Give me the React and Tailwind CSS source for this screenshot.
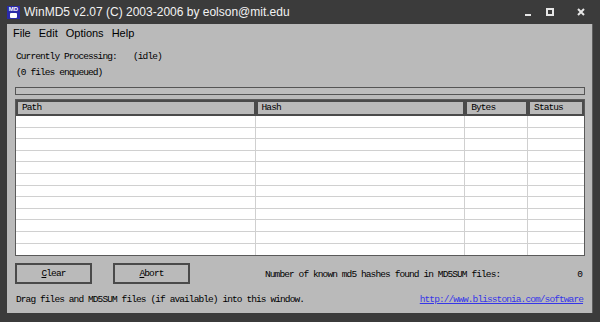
import React from "react";

const mono = { fontFamily: '"Liberation Mono", "DejaVu Sans Mono", monospace' };

function TitleBar() {
  return (
    <div className="h-[24px] flex items-center pl-[7px] pr-[10px] text-white">
      {/* app icon */}
      <div className="w-[13px] h-[13px] bg-[#2a2aa8] relative flex flex-col items-center justify-start">
        <span className="text-[6px] leading-[7px] font-bold text-white" style={{ fontFamily: '"Liberation Sans", sans-serif' }}>MD</span>
        <span className="w-[7px] h-[5px] bg-white rounded-[1px]" />
      </div>
      <span
        className="ml-[4px] text-[12px] leading-none text-[#f2f2f2]"
        style={{ fontFamily: '"Liberation Sans", Arial, sans-serif' }}
      >
        WinMD5 v2.07 (C) 2003-2006 by eolson@mit.edu
      </span>
      <div className="ml-auto flex items-center">
        <svg width="8" height="8" viewBox="0 0 8 8" className="mr-[14px] mt-[1px]">
          <rect x="1" y="5" width="6" height="2" fill="#e6e6e6" />
        </svg>
        <svg width="8" height="8" viewBox="0 0 8 8" className="mr-[23px]">
          <rect x="1" y="1" width="6" height="6" fill="none" stroke="#e6e6e6" strokeWidth="2" />
        </svg>
        <svg width="8" height="8" viewBox="0 0 8 8" className="mr-[5px]">
          <path d="M1 1 L7 7 M7 1 L1 7" stroke="#e6e6e6" strokeWidth="2" />
        </svg>
      </div>
    </div>
  );
}

function MenuBar() {
  const items = ["File", "Edit", "Options", "Help"];
  return (
    <div
      className="h-[18px] flex items-center pl-[6px] gap-[8px] text-[11px] text-black"
      style={{ fontFamily: '"Liberation Sans", Tahoma, sans-serif' }}
    >
      {items.map((m) => (
        <span key={m}>{m}</span>
      ))}
    </div>
  );
}

function HeaderCell({ label, w }) {
  return (
    <div
      className="h-[16px] flex items-center pl-[4px] bg-[#bababa] border-[2px] border-[#4a4a4a]"
      style={{ width: w }}
    >
      <span className="text-[9.5px] tracking-[-0.9px] text-black" style={mono}>
        {label}
      </span>
    </div>
  );
}

function Table() {
  const cols = [
    { label: "Path", w: 240 },
    { label: "Hash", w: 210 },
    { label: "Bytes", w: 63 },
    { label: "Status", w: 56 },
  ];
  const rows = Array.from({ length: 12 });
  return (
    <div className="mx-[8px] mt-[4px] border border-[#5a5a5a] bg-white w-[570px]">
      <div className="flex bg-[#bababa]">
        {cols.map((c) => (
          <HeaderCell key={c.label} label={c.label} w={c.w} />
        ))}
      </div>
      <div className="flex flex-col">
        {rows.map((_, i) => (
          <div key={i} className="flex h-[11.6px] border-b border-[#d0d0d0] last:border-b-0">
            {cols.map((c, j) => (
              <div
                key={j}
                className={j < cols.length - 1 ? "border-r border-[#d0d0d0]" : ""}
                style={{ width: c.w }}
              />
            ))}
          </div>
        ))}
      </div>
    </div>
  );
}

function Button({ first, rest }) {
  return (
    <button className="w-[77px] h-[21px] border-[2px] border-[#4a4a4a] bg-[#bababa] flex items-center justify-center">
      <span className="text-[9.5px] tracking-[-0.9px] text-black" style={mono}>
        <span className="underline">{first}</span>
        {rest}
      </span>
    </button>
  );
}

export default function App() {
  return (
    <div className="w-[600px] h-[322px] bg-[#3b3b3b] flex flex-col overflow-hidden">
      <TitleBar />
      <div className="mx-[7px] h-[289px] bg-[#bababa] border-r border-[#5f5f5f] flex flex-col">
        <MenuBar />
        <div className="text-[9.5px] tracking-[-0.9px] text-black pl-[9px]" style={mono}>
          <div className="mt-[8px] h-[14px] flex items-center">
            <span className="w-[117px]">Currently Processing:</span>
            <span>(idle)</span>
          </div>
          <div className="mt-[2px] h-[14px] flex items-center">(0 files enqueued)</div>
        </div>
        <div className="mx-[8px] mt-[7px] h-[8px] w-[570px] border border-[#555] bg-[#bdbdbd]" />
        <Table />
        <div className="mx-[8px] mt-[7px] w-[570px] flex items-center">
          <Button first="C" rest="lear" />
          <div className="ml-[21px]">
            <Button first="A" rest="bort" />
          </div>
          <span className="ml-[75px] mt-[3px] text-[9.5px] tracking-[-0.9px] text-black" style={mono}>
            Number of known md5 hashes found in MD5SUM files:
          </span>
          <span className="ml-auto mr-[2px] mt-[3px] text-[9.5px] text-black" style={mono}>
            0
          </span>
        </div>
        <div className="mx-[9px] mt-[9px] w-[568px] flex items-center text-[9.5px] tracking-[-0.9px]" style={mono}>
          <span className="text-black">Drag files and MD5SUM files (if available) into this window.</span>
          <a href="#" className="ml-auto mr-[1px] text-[#3636e8] underline">
            http://www.blisstonia.com/software
          </a>
        </div>
      </div>
    </div>
  );
}
